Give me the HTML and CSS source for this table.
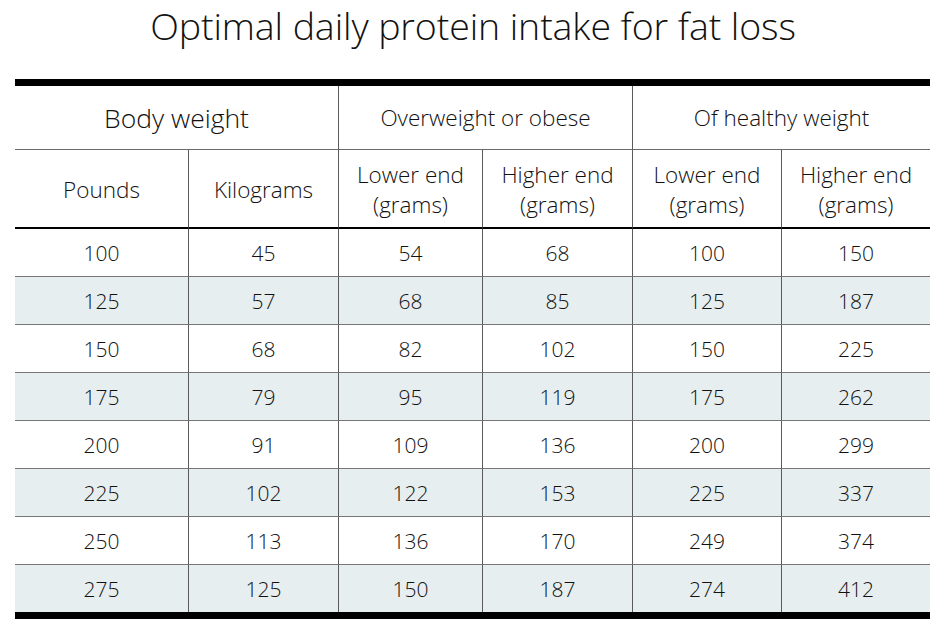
FILE: index.html
```html
<!DOCTYPE html>
<html lang="en">
<head>
<meta charset="utf-8">
<title>Optimal daily protein intake for fat loss</title>
<link rel="stylesheet" href="styles.css">
</head>
<body>
<div class="page">
  <h1 class="title">Optimal daily protein intake for fat loss</h1>
  <table class="protein">
    <colgroup>
      <col class="c1"><col class="c2"><col class="c3"><col class="c4"><col class="c5"><col class="c6">
    </colgroup>
    <thead>
      <tr class="group">
        <th colspan="2" class="big">Body weight</th>
        <th colspan="2" class="vl">Overweight or obese</th>
        <th colspan="2" class="vl">Of healthy weight</th>
      </tr>
      <tr class="sub">
        <th>Pounds</th>
        <th class="vl">Kilograms</th>
        <th class="vl">Lower end<br>(grams)</th>
        <th class="vl">Higher end<br>(grams)</th>
        <th class="vl">Lower end<br>(grams)</th>
        <th class="vl">Higher end<br>(grams)</th>
      </tr>
    </thead>
    <tbody>
      <tr><td>100</td><td class="vl">45</td><td class="vl">54</td><td class="vl">68</td><td class="vl">100</td><td class="vl">150</td></tr>
      <tr class="alt"><td>125</td><td class="vl">57</td><td class="vl">68</td><td class="vl">85</td><td class="vl">125</td><td class="vl">187</td></tr>
      <tr><td>150</td><td class="vl">68</td><td class="vl">82</td><td class="vl">102</td><td class="vl">150</td><td class="vl">225</td></tr>
      <tr class="alt"><td>175</td><td class="vl">79</td><td class="vl">95</td><td class="vl">119</td><td class="vl">175</td><td class="vl">262</td></tr>
      <tr><td>200</td><td class="vl">91</td><td class="vl">109</td><td class="vl">136</td><td class="vl">200</td><td class="vl">299</td></tr>
      <tr class="alt"><td>225</td><td class="vl">102</td><td class="vl">122</td><td class="vl">153</td><td class="vl">225</td><td class="vl">337</td></tr>
      <tr><td>250</td><td class="vl">113</td><td class="vl">136</td><td class="vl">170</td><td class="vl">249</td><td class="vl">374</td></tr>
      <tr class="alt last"><td>275</td><td class="vl">125</td><td class="vl">150</td><td class="vl">187</td><td class="vl">274</td><td class="vl">412</td></tr>
    </tbody>
  </table>
</div>
</body>
</html>
```
FILE: styles.css
```css
* { box-sizing: border-box; }
html, body { margin: 0; padding: 0; background: #fff; }
body {
  font-family: "Open Sans", "Liberation Sans", sans-serif;
  font-weight: 300;
  color: #111;
}
.page { width: 946px; height: 639px; }
.title {
  margin: 0;
  height: 79px;
  padding-top: 3px;
  font-size: 37.5px;
  line-height: 46px;
  font-weight: 300;
  text-align: center;
  letter-spacing: -0.1px;
}
.protein {
  margin-left: 15px;
  width: 915px;
  border-collapse: separate;
  border-spacing: 0;
  table-layout: fixed;
  border-top: 7px solid #000;
  border-bottom: 7px solid #000;
}
.c1 { width: 173px; }
.c2 { width: 150px; }
.c3 { width: 144px; }
.c4 { width: 150px; }
.c5 { width: 149px; }
.c6 { width: 149px; }
th, td {
  padding: 0;
  text-align: center;
  font-weight: 300;
  vertical-align: middle;
}
.vl { border-left: 1px solid #5a5a5a; }
.group th {
  height: 64px;
  border-bottom: 1px solid #6a6a6a;
  font-size: 22.5px;
  padding-top: 0;
}
.group th.big { font-size: 26.5px; }
.sub th {
  height: 79px;
  border-bottom: 2px solid #000;
  font-size: 22.5px;
  line-height: 30px;
  padding-top: 2px;
}
td {
  height: 48px;
  border-bottom: 1px solid #777;
  font-size: 21px;
  padding-top: 1px;
}
.last td { height: 47px; border-bottom: 0; }
.alt td { background: #e6eef0; }
```
